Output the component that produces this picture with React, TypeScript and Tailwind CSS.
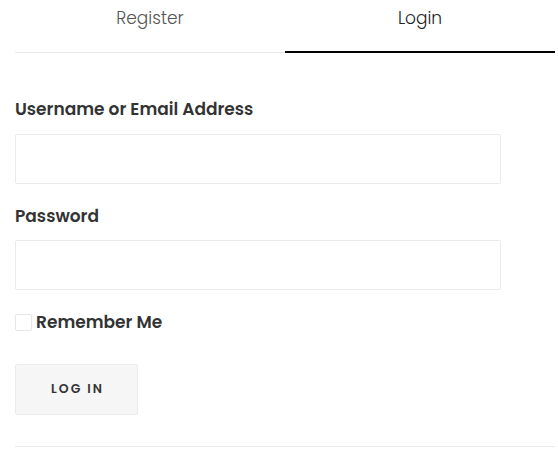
const font = "font-['Poppins','Open_Sans','Liberation_Sans',sans-serif]";

const App = () => {
  return (
    <div className={`w-[558px] h-[464px] bg-white ${font}`}>
      <div className="pl-[15px] pr-[3px]">
        <div className="flex">
          <button className="w-[270px] h-[53px] border-b border-[#e9e9e9] text-[17px] font-light text-[#555555] leading-[24px] pb-[17px]">
            Register
          </button>
          <button className="w-[270px] h-[53px] border-b-2 border-black text-[17px] font-light text-[#222222] leading-[24px] pb-[16px]">
            Login
          </button>
        </div>

        <form className="pt-[44px] flex flex-col">
          <label className="text-[17px] font-semibold text-[#333333] leading-[24px]">
            Username or Email Address
          </label>
          <input
            type="text"
            className="mt-[13px] w-[486px] h-[50px] border border-[#ebebeb] rounded-[2px] bg-white outline-none"
          />
          <label className="mt-[20px] text-[17px] font-semibold text-[#333333] leading-[24px]">
            Password
          </label>
          <input
            type="password"
            className="mt-[12px] w-[486px] h-[50px] border border-[#ebebeb] rounded-[2px] bg-white outline-none"
          />
          <div className="mt-[20px] flex items-center h-[24px]">
            <span className="w-[17px] h-[17px] border border-[#e6e6e6] rounded-[2px] bg-white" />
            <span className="ml-[4px] text-[17px] font-semibold text-[#333333] leading-[24px]">
              Remember Me
            </span>
          </div>
          <button
            type="button"
            className="mt-[30px] w-[123px] h-[51px] bg-[#f6f6f6] border border-[#ebebeb] rounded-[2px] text-[12.5px] font-semibold tracking-[2px] text-[#333333] pl-[2px]"
          >
            LOG IN
          </button>
          <div className="mt-[31px] h-px w-[540px] bg-[#ebebeb]" />
        </form>
      </div>
    </div>
  );
};

export default App;
